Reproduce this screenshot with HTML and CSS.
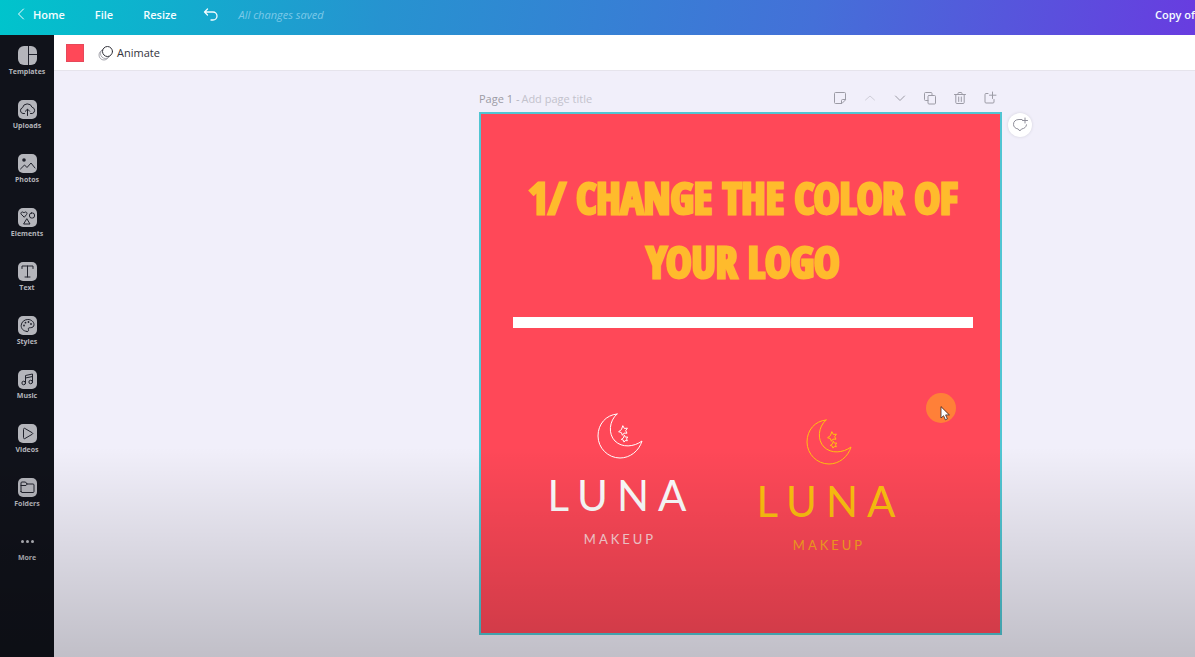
FILE: index.html
```html
<!DOCTYPE html>
<html lang="en">
<head>
<meta charset="utf-8">
<meta name="viewport" content="width=device-width, initial-scale=1">
<title>Design editor</title>
<link rel="stylesheet" href="styles.css">
</head>
<body>
<svg class="defs" aria-hidden="true">
  <symbol id="moon" viewBox="0 0 46 46">
    <path d="M20 1C9 2 1 11 1 23c0 12 10 22 22 22 10 0 19-7 22-17-8 6-20 7-27 0S12 8 20 1Z"/>
    <path d="m26 13 1.400 2.500 3-.4-1.700 2.600 1.300 2.500-3-.1-1.600 2.200-1-2.700-2.800-.9 2.500-1.800Z"/>
    <path d="m27.500 22.500 1 1.700 2.200-.2-1.200 1.900.9 1.800-2.200-.1-1.200 1.500-.7-2-2-.7 1.800-1.200Z"/>
  </symbol>
</svg>
<header class="topbar">
  <a class="topbar-home" href="#"><svg class="i-back" viewBox="0 0 8 12"><path d="M6.500 1 1.500 6l5 5"/></svg>Home</a>
  <button class="topbar-button topbar-file">File</button>
  <button class="topbar-button topbar-resize">Resize</button>
  <button class="topbar-button topbar-undo" aria-label="Undo"><svg class="i-undo" viewBox="0 0 16 13"><path d="M4.500 1 1.500 4l3 3M1.500 4H10a4 4 0 0 1 0 8H8"/></svg></button>
  <span class="topbar-status">All changes saved</span>
  <span class="topbar-name">Copy of</span>
</header>
<div class="workspace">
  <nav class="sidebar" aria-label="Editor panels">
    <button class="side-item"><svg viewBox="0 0 19 19"><rect class="tile" width="19" height="19" rx="6"/><path d="M10.500 0v19M10.500 8.500H19"/></svg>Templates</button>
    <button class="side-item"><svg viewBox="0 0 19 19"><rect class="tile" width="19" height="19" rx="5"/><path d="M6.500 13.500H5a3 3 0 0 1-.5-5.800 5 5 0 0 1 9.600-.4 3.200 3.200 0 0 1 .2 6.200h-1.800M9.500 15.500V9.500M7.300 11.300l2.200-2.200 2.200 2.200"/></svg>Uploads</button>
    <button class="side-item"><svg viewBox="0 0 19 19"><rect class="tile" width="19" height="19" rx="5"/><circle class="solid" cx="6" cy="6" r="1.800"/><path d="m2.500 15 4-4 2.500 2.500L13 9l4 5"/></svg>Photos</button>
    <button class="side-item"><svg viewBox="0 0 19 19"><rect class="tile" width="19" height="19" rx="5"/><path d="M6 9 3.200 6.200C2 4.500 4.800 2.800 6 5c1.200-2.200 4-.5 2.800 1.200ZM9 11l3 5H6Z"/><rect x="11.500" y="5" width="5" height="5" rx="2"/></svg>Elements</button>
    <button class="side-item"><svg viewBox="0 0 19 19"><rect class="tile" width="19" height="19" rx="5"/><path d="M4 6.500V4h11v2.500M9.500 4v11M7 15h5"/></svg>Text</button>
    <button class="side-item"><svg viewBox="0 0 19 19"><rect class="tile" width="19" height="19" rx="5"/><path d="M9 15.500C5 15 3 12.500 3.200 9.300 3.500 6 6.300 3.500 9.800 3.500c3.500 0 6.200 2.300 6.200 5.200 0 2-1.500 3-3.500 3-2.500 0-2.500 1-2 2 .4 1-.3 2-1.500 1.800Z"/><circle class="solid" cx="6" cy="9.500" r=".9"/><circle class="solid" cx="7.500" cy="6.700" r=".9"/><circle class="solid" cx="10.500" cy="6" r=".9"/><circle class="solid" cx="13" cy="8" r=".9"/></svg>Styles</button>
    <button class="side-item"><svg viewBox="0 0 19 19"><rect class="tile" width="19" height="19" rx="5"/><path d="M7.500 13V5.500L14.500 4v8M7.500 8l7-1.500"/><circle cx="5.700" cy="13" r="1.800"/><circle cx="12.700" cy="12" r="1.800"/></svg>Music</button>
    <button class="side-item"><svg viewBox="0 0 19 19"><rect class="tile" width="19" height="19" rx="5"/><path d="M5.500 5.200c0-.8.6-1.100 1.300-.8l7.500 4.400c.6.400.6 1 0 1.400l-7.500 4.400c-.7.300-1.300 0-1.300-.8Z"/></svg>Videos</button>
    <button class="side-item"><svg viewBox="0 0 19 19"><rect class="tile" width="19" height="19" rx="5"/><path d="M3 13.500V5q0-1 1-1h3.500L9 6h6q1 0 1 1v6.500q0 1-1 1H4q-1 0-1-1ZM3 7.500h5L9.200 6"/></svg>Folders</button>
    <button class="side-item"><svg viewBox="0 0 19 19"><circle class="tile" cx="4.500" cy="9.500" r="1.500"/><circle class="tile" cx="9.500" cy="9.500" r="1.500"/><circle class="tile" cx="14.500" cy="9.500" r="1.500"/></svg>More</button>
  </nav>
  <main class="editor">
    <div class="toolbar">
      <button class="swatch" aria-label="Background colour"></button>
      <button class="animate"><svg class="i-animate" viewBox="0 0 16 16"><circle class="trail" cx="6" cy="10" r="5"/><circle class="trail" cx="7.500" cy="8.500" r="5"/><circle class="front" cx="9.500" cy="6.500" r="5"/></svg>Animate</button>
    </div>
    <div class="stage">
      <section class="page">
        <div class="page-head">
          <label class="page-label" for="page-title">Page 1 <span class="page-dash">-</span></label>
          <input class="page-title" id="page-title" type="text" placeholder="Add page title">
          <button class="page-tool" aria-label="Notes"><svg viewBox="0 0 14 14"><path d="M8.500 12.500h-6q-1 0-1-1v-9q0-1 1-1h9q1 0 1 1v6ZM8.500 12.500v-3q0-1 1-1h3"/></svg></button>
          <button class="page-tool" aria-label="Move up" disabled><svg viewBox="0 0 14 14"><path d="m2.500 9 4.500-4 4.500 4"/></svg></button>
          <button class="page-tool" aria-label="Move down"><svg viewBox="0 0 14 14"><path d="m2.500 5 4.500 4.500L11.500 5"/></svg></button>
          <button class="page-tool" aria-label="Duplicate page"><svg viewBox="0 0 14 14"><rect x="5" y="4.500" width="7.500" height="8.500" rx="1"/><path d="M5 9.500H2.500q-1 0-1-1v-6q0-1 1-1H8q1 0 1 1v2"/></svg></button>
          <button class="page-tool" aria-label="Delete page"><svg viewBox="0 0 14 14"><path d="M1.500 3.500h11M5 3.500v-1q0-1 1-1h2q1 0 1 1v1M2.800 3.500v8q0 1 1 1h6.400q1 0 1-1v-8M5.700 6v4.500M8.300 6v4.500"/></svg></button>
          <button class="page-tool" aria-label="Add page"><svg viewBox="0 0 14 14"><path d="M5 2.500H3q-1 0-1 1V11q0 1 1 1h7q1 0 1-1V8.500M9.500 1v6.500M6.500 4.200h6.500"/></svg></button>
        </div>
        <article class="artboard">
          <h1 class="headline">1/ CHANGE THE COLOR OF YOUR LOGO</h1>
          <div class="rule"></div>
          <div class="logos">
            <div class="logo">
              <svg class="logo-moon"><use href="#moon"/></svg>
              <span class="logo-name">LUNA</span>
              <span class="logo-sub">MAKEUP</span>
            </div>
            <div class="logo logo-gold">
              <svg class="logo-moon"><use href="#moon"/></svg>
              <span class="logo-name">LUNA</span>
              <span class="logo-sub">MAKEUP</span>
            </div>
          </div>
          <div class="pointer"><svg class="pointer-arrow" viewBox="0 0 10 15"><path d="M1 1v11l2.600-2.300 1.800 4.100 2-.9-1.800-4H9Z"/></svg></div>
        </article>
      </section>
      <button class="comment" aria-label="Add comment"><svg viewBox="0 0 16 16"><path d="M10 2.500H7C3.500 2.500 1.500 4.500 1.500 7.300c0 2.500 1.700 4.200 4.700 4.700l1.600 2 1.700-2c2.800-.4 4.700-1.800 5-4.200M13 1v5M10.500 3.500h5"/></svg></button>
    </div>
  </main>
</div>
</body>
</html>
```
FILE: styles.css
```css
* { box-sizing: border-box; }

body {
  position: relative;
  display: flex;
  flex-direction: column;
  min-height: 100vh;
  margin: 0;
  overflow-x: hidden;
  background: #f1effa;
  color: #33343c;
  font-family: "Open Sans", "Noto Sans", sans-serif;
}

/* shade that deepens toward the bottom of the window */
body::after {
  content: "";
  position: absolute;
  inset: 0;
  background: linear-gradient(transparent 68%, rgba(0, 0, 0, 0.2) 100%);
  pointer-events: none;
}

button {
  padding: 0;
  border: 0;
  background: none;
  color: inherit;
  font: inherit;
}

svg {
  display: block;
  fill: none;
  stroke: currentColor;
  stroke-linecap: round;
  stroke-linejoin: round;
}

.defs { position: absolute; width: 0; height: 0; }

.topbar {
  display: flex;
  align-items: center;
  height: 35px;
  padding: 0 0 7px 17px;
  background: linear-gradient(100deg, #00c4cc, #2693d0 32%, #4470d8 68%, #683ce0);
  color: #f4fdff;
  font-size: 11px;
  font-weight: 600;
  white-space: nowrap;
}

.topbar-home {
  display: flex;
  align-items: center;
  gap: 8px;
  color: inherit;
  text-decoration: none;
}

.i-back { width: 8px; height: 12px; }
.topbar-file { margin-left: 30px; }
.topbar-resize { margin-left: 30px; }
.topbar-undo { margin-left: 26px; }
.i-undo { width: 16px; height: 13px; stroke-width: 1.3; }

.topbar-status {
  margin-left: 20px;
  color: #7cc9e8;
  font-style: italic;
  font-weight: 400;
}

.topbar-name { margin-left: auto; }

.workspace { display: flex; flex: 1; }

.sidebar {
  display: flex;
  flex: none;
  flex-direction: column;
  width: 54px;
  padding-top: 11px;
  background: #10121a;
}

.side-item {
  display: flex;
  flex-direction: column;
  align-items: center;
  gap: 2px;
  height: 54px;
  color: #b4b5bb;
  font-size: 7px;
  font-weight: 700;
  line-height: 10px;
}

.side-item svg { width: 19px; height: 19px; stroke: #20222c; }
.side-item .tile { fill: #b4b5bb; stroke: none; }
.side-item .solid { fill: #20222c; stroke: none; }

.editor { display: flex; flex: 1; flex-direction: column; min-width: 0; }

.toolbar {
  display: flex;
  align-items: center;
  gap: 14px;
  height: 36px;
  padding-left: 12px;
  border-bottom: 1px solid #e6e4ec;
  background: #fff;
}

.swatch { width: 18px; height: 18px; border: 1px solid #e6485a; background: #ff4858; }
.animate { display: flex; align-items: center; gap: 3px; font-size: 11px; }
.i-animate { width: 16px; height: 16px; }
.i-animate .trail { stroke: #8e8e98; stroke-width: 0.8; }
.i-animate .front { fill: #fff; }

.stage {
  display: grid;
  flex: 1;
  grid-template-columns: 425fr 523px 193fr;
  align-items: start;
  padding: 17px 0 22px;
}

.page { grid-column: 2; }

.page-head {
  display: flex;
  align-items: center;
  height: 20px;
  margin-bottom: 4px;
  padding-right: 5px;
  color: #9c9ba5;
  font-size: 11px;
}

.page-label { white-space: nowrap; }
.page-dash { color: #b4b3bd; }

.page-title {
  flex: 1;
  min-width: 0;
  margin-left: 2px;
  padding: 0;
  border: 0;
  background: none;
  font: inherit;
}

.page-title::placeholder { color: #c3c2cc; opacity: 1; }
.page-tool { width: 14px; height: 14px; margin-left: 16px; }
.page-tool:disabled { color: #cfced8; }
.page-tool svg { width: 14px; height: 14px; }

.artboard {
  position: relative;
  height: 523px;
  padding: 52px 27px 0 32px;
  border: 2px solid #50c5d2;
  background: #ff4858;
}

.headline {
  margin: 0;
  color: #ffbb2c;
  font-family: "Open Sans Condensed", "Liberation Sans Narrow", "Liberation Sans", sans-serif;
  font-size: 43px;
  font-weight: 700;
  line-height: 64px;
  text-align: center;
  -webkit-text-stroke: 3px #ffbb2c;
}

.rule { height: 11px; margin-top: 23px; background: #fff; }

.logos {
  display: flex;
  gap: 69px;
  padding: 85px 0 0 37px;
}

.logo {
  display: flex;
  flex-direction: column;
  align-items: center;
  width: 140px;
  color: #fff;
  font-family: Lato, sans-serif;
}

.logo-gold { margin-top: 6px; color: #ffc20f; }
.logo-moon { width: 46px; height: 46px; }

.logo-name {
  margin-top: 10px;
  padding-left: 3px;
  font-size: 42px;
  letter-spacing: 9px;
  line-height: 52px;
}

.logo-sub {
  margin-top: 8px;
  font-size: 13px;
  letter-spacing: 3px;
  line-height: 20px;
  opacity: 0.75;
}

.pointer {
  position: absolute;
  top: 279px;
  left: 445px;
  width: 30px;
  height: 30px;
  padding: 13px 0 0 14px;
  border-radius: 50%;
  background: #ff8038;
}

.pointer-arrow { width: 10px; height: 15px; fill: #fff; stroke: #3a2a2a; stroke-width: 0.8; }

.comment {
  display: grid;
  place-items: center;
  width: 24px;
  height: 24px;
  margin: 25px 0 0 6px;
  border-radius: 50%;
  background: #fff;
  box-shadow: 0 0 3px #d2d0dc;
  color: #8f8e9a;
}

.comment svg { width: 16px; height: 16px; }
```
